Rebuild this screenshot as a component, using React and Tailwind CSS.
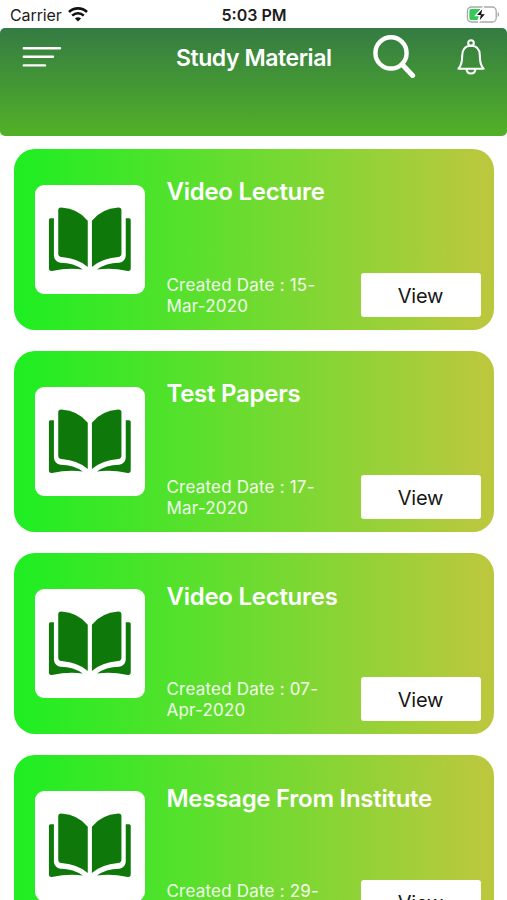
import React from 'react';

const MATERIALS = [
    { id: 1, title: 'Video Lecture', created: ['15-', 'Mar-2020'] },
    { id: 2, title: 'Test Papers', created: ['17-', 'Mar-2020'] },
    { id: 3, title: 'Video Lectures', created: ['07-', 'Apr-2020'] },
    { id: 4, title: 'Message From Institute', created: ['29-', 'Apr-2020'] },
];

function WifiIcon() {
    return (
        <svg className="w-[20px] h-[15px]" viewBox="0 0 20 15" fill="none" stroke="#111" strokeWidth="2.6">
            <path d="M1 5C6 .2 14 .2 19 5" />
            <path d="M4.2 8.6C7.6 5.4 12.4 5.4 15.8 8.6" />
            <path d="M10 14.4 6.9 11.5Q10 9 13.1 11.5Z" fill="#111" stroke="none" />
        </svg>
    );
}

function BatteryIcon() {
    return (
        <svg className="w-[34px] h-[17px]" viewBox="0 0 34 17" fill="none">
            <rect x="1.4" y="1" width="28.8" height="15" rx="4" stroke="#a9a9a9" strokeWidth="1.3" />
            <path d="M31.6 6v5q1.6-.8 1.6-2.5T31.6 6Z" fill="#a9a9a9" />
            <path d="M5 3H15L9 9.6H13L11.5 14H5Q3.4 14 3.4 12V5Q3.4 3 5 3Z" fill="#34c759" />
            <path d="M17.4 1 9.6 9.6h4.4L12.6 16.4l7.8-8.9h-4.4Z" fill="#111" stroke="#fff" strokeWidth="1.3" />
        </svg>
    );
}

function StatusBar() {
    return (
        <div className="grid grid-cols-3 items-center h-7 pl-[10px] pr-[7px] text-[#1c1c1c] text-[16px]">
            <div className="flex items-center gap-[6px]">
                <span className="tracking-[-0.1px] pt-px">Carrier</span>
                <WifiIcon />
            </div>
            <span className="text-center font-semibold pt-px pr-[2px] whitespace-nowrap">5:03 PM</span>
            <div className="flex justify-end">
                <BatteryIcon />
            </div>
        </div>
    );
}

function Header() {
    return (
        <header className="h-[107.5px] rounded-[5px] bg-linear-to-b/srgb from-[#347b43] to-[#52b127] pl-[22px] pr-[21px]">
            <div className="flex items-center h-[58px] text-white">
                <svg className="w-[40px] h-[24px]" viewBox="0 0 40 24" stroke="currentColor" strokeWidth="2.4" strokeLinecap="round">
                    <path d="M1.8 3.2H38M1.8 11.7H31M1.8 20.4H23" />
                </svg>
                <h1 className="ml-[114px] w-[160px] pt-[2px] text-[23px] font-semibold whitespace-nowrap tracking-[-0.43px]">Study Material</h1>
                <svg className="ml-[36px] w-[44px] h-[46px]" viewBox="0 0 44 46" fill="none" stroke="currentColor">
                    <circle cx="19" cy="18.9" r="15.6" strokeWidth="4.4" />
                    <path d="M30.2 30.6 40.6 41.4" strokeWidth="5" strokeLinecap="round" />
                </svg>
                <svg className="ml-auto w-[30px] h-[38px]" viewBox="0 0 30 38" fill="none" stroke="currentColor" strokeWidth="2.1" strokeLinejoin="round">
                    <circle cx="15" cy="5" r="2.8" />
                    <path d="M15 7.8C8.8 7.8 6.2 12 6.2 17.5C6.2 24 5.6 27.5 2.4 30.8H27.6C24.4 27.5 23.8 24 23.8 17.5C23.8 12 21.2 7.8 15 7.8Z" />
                    <path d="M10.6 31C10.8 37 19.2 37 19.4 31" />
                </svg>
            </div>
        </header>
    );
}

function BookIcon() {
    return (
        <svg className="w-full h-full" viewBox="15 15 330 330" fill="#0f780b">
            <g id="half">
                <path d="M85 91Q85 83 94 83Q147 87 174 123V262Q147 237 95 232Q85 231 85 222Z" />
                <path d="M57 120Q57 115 62 115H72V228Q73 246 92 249Q132 249 159 270Q118 263 66 274Q57 275 57 266Z" />
            </g>
            <use href="#half" transform="translate(360.5 0) scale(-1 1)" />
        </svg>
    );
}

function MaterialCard({ title, created }) {
    return (
        <div className="flex shrink-0 h-[181.5px] rounded-[21px] bg-linear-to-r/srgb from-[#20ee22] from-2% to-[#bbc83e] to-98% pl-[21.5px] pr-[13.5px]">
            <div className="mt-[36px] w-[109.5px] h-[109.5px] shrink-0 rounded-[9px] bg-white">
                <BookIcon />
            </div>
            <div className="ml-[22px] flex-1 flex flex-col justify-between pt-[27.6px] pb-[13px] text-white">
                <h2 className="text-[24px] leading-[32px] font-semibold whitespace-nowrap tracking-[-0.27px]">{title}</h2>
                <div className="flex items-end justify-between">
                    <p className="text-[17px] leading-[21px] whitespace-nowrap tracking-[0.2px] pb-[0.3px] text-white/90">
                        Created Date : {created[0]}
                        <br />
                        {created[1]}
                    </p>
                    <button className="w-[120px] h-[44px] pt-[2px] shrink-0 rounded-[3px] bg-white text-[20px] tracking-[-0.2px] text-[#161616]">
                        View
                    </button>
                </div>
            </div>
        </div>
    );
}

export default function App() {
    return (
        <div className="h-[900px] w-[507px] overflow-hidden bg-white font-['Inter','Liberation_Sans',sans-serif]">
            <StatusBar />
            <Header />
            <main className="flex flex-col gap-[20.7px] pt-[13.1px] pl-[13.5px] pr-[13px]">
                {MATERIALS.map((item) => (
                    <MaterialCard key={item.id} title={item.title} created={item.created} />
                ))}
            </main>
        </div>
    );
}
